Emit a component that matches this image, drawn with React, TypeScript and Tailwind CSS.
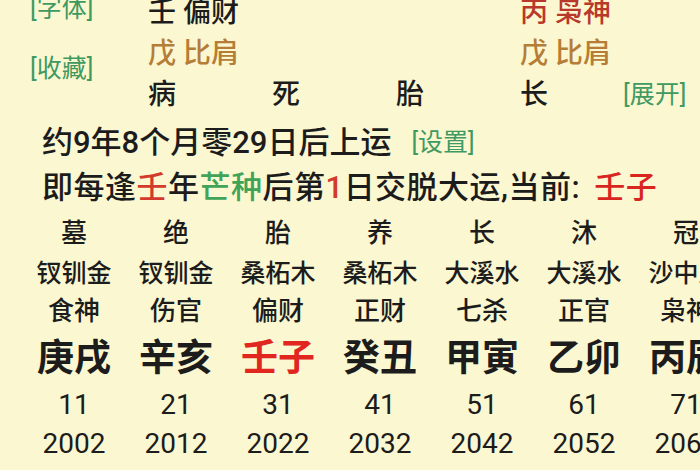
import React from "react";

const FONT = { fontFamily: 'Roboto, "Noto Sans CJK SC", "Noto Sans", sans-serif' };

type Pillar = {
    stage: string;
    nayin: string;
    god: string;
    gz: string;
    age: string;
    year: string;
    current?: boolean;
};

const pillars: Pillar[] = [
    { stage: "墓", nayin: "钗钏金", god: "食神", gz: "庚戌", age: "11", year: "2002" },
    { stage: "绝", nayin: "钗钏金", god: "伤官", gz: "辛亥", age: "21", year: "2012" },
    { stage: "胎", nayin: "桑柘木", god: "偏财", gz: "壬子", age: "31", year: "2022", current: true },
    { stage: "养", nayin: "桑柘木", god: "正财", gz: "癸丑", age: "41", year: "2032" },
    { stage: "长", nayin: "大溪水", god: "七杀", gz: "甲寅", age: "51", year: "2042" },
    { stage: "沐", nayin: "大溪水", god: "正官", gz: "乙卯", age: "61", year: "2052" },
    { stage: "冠", nayin: "沙中土", god: "枭神", gz: "丙辰", age: "71", year: "2062" },
];

const extra = ["壬戌", "癸亥", "甲子", "乙丑", "丙寅", "丁卯", "戊辰"];

const Row = ({ h, className, items }: { h: string; className: string; items: React.ReactNode[] }) => (
    <div className={`grid grid-cols-[repeat(7,102px)] ${h}`}>
        {items.map((it, i) => (
            <div key={i} className={`flex items-center justify-center whitespace-nowrap leading-none ${className}`}>
                {it}
            </div>
        ))}
    </div>
);

export default function App() {
    return (
        <div className="w-[700px] h-[470px] overflow-hidden bg-[#fbf7d1] text-[#1c1c1c] font-medium" style={FONT}>
            {/* pillars summary */}
            <div className="flex -mt-[8px]">
                <div className="w-[148px] pl-[30px] flex flex-col text-[25px] leading-none font-normal text-[#3f9a62]">
                    <div className="h-[33px] flex items-center">[字体]</div>
                    <div className="h-[62px] flex items-center mt-[12px]">[收藏]</div>
                </div>
                <div className="grid grid-cols-[124px_124px_124px_103px_1fr] text-[28px] leading-none">
                    <div className="h-[41px] flex items-center">壬 偏财</div>
                    <div />
                    <div />
                    <div className="h-[41px] flex items-center text-[#b8392c]">丙 枭神</div>
                    <div />

                    <div className="h-[41px] flex items-center text-[#b57d36]">戊 比肩</div>
                    <div />
                    <div />
                    <div className="h-[41px] flex items-center text-[#b57d36]">戊 比肩</div>
                    <div />

                    <div className="h-[41px] flex items-center">病</div>
                    <div className="h-[41px] flex items-center">死</div>
                    <div className="h-[41px] flex items-center">胎</div>
                    <div className="h-[41px] flex items-center">长</div>
                    <div className="h-[41px] flex items-center text-[25px] font-normal text-[#3f9a62]">[展开]</div>
                </div>
            </div>

            {/* start of luck */}
            <div className="pl-[42px] mt-[4px]">
                <div className="h-[46px] flex items-center text-[31px] leading-none whitespace-nowrap">
                    约9年8个月零29日后上运
                    <span className="ml-[20px] text-[25px] font-normal text-[#3f9a62]">[设置]</span>
                </div>
                <div className="h-[44px] flex items-center text-[31px] leading-none whitespace-nowrap tracking-[0.5px]">
                    即每逢<span className="text-[#d23a2c]">壬</span>年<span className="text-[#3fa457]">芒种</span>后第<span className="text-[#d23a2c]">1</span>日交脱大运,当前: <span className="ml-[14px] text-[#d8261f]">壬子</span>
                </div>
            </div>

            {/* da yun table */}
            <div className="pl-[23px] mt-[4px]">
                <Row h="h-[40px]" className="text-[26px]" items={pillars.map((p) => p.stage)} />
                <Row h="h-[40px]" className="text-[25px]" items={pillars.map((p) => p.nayin)} />
                <Row h="h-[36px]" className="text-[26px]" items={pillars.map((p) => p.god)} />
                <Row
                    h="h-[58px]"
                    className="text-[37px] font-bold"
                    items={pillars.map((p) => (
                        <span className={p.current ? "text-[#e1251f]" : ""}>{p.gz}</span>
                    ))}
                />
                <Row h="h-[36px]" className="text-[28px] font-normal" items={pillars.map((p) => p.age)} />
                <Row h="h-[42px]" className="text-[28px] font-normal" items={pillars.map((p) => p.year)} />
                <Row h="h-[34px] mt-[6px]" className="text-[26px]" items={extra} />
            </div>
        </div>
    );
}
